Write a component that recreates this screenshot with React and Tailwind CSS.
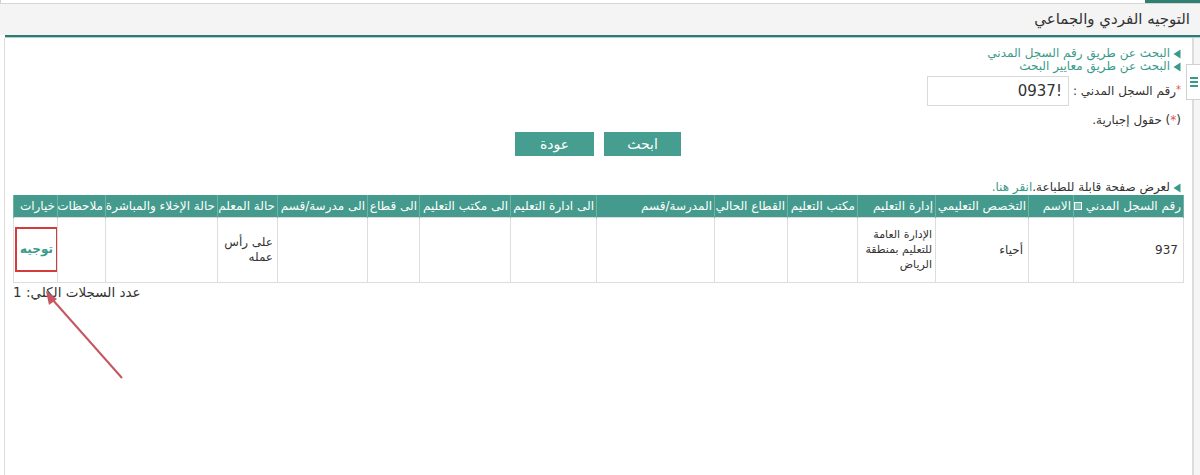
import React from 'react';

const columns = [
  { title: 'رقم السجل المدني', w: 'w-[110px]', icon: true },
  { title: 'الاسم', w: 'w-[45px]' },
  { title: 'التخصص التعليمي', w: 'w-[93px]' },
  { title: 'إدارة التعليم', w: 'w-[78px]' },
  { title: 'مكتب التعليم', w: 'w-[70px]' },
  { title: 'القطاع الحالي', w: 'w-[73px]' },
  { title: 'المدرسة/قسم', w: 'w-[118px]' },
  { title: 'الى ادارة التعليم', w: 'w-[86px]' },
  { title: 'الى مكتب التعليم', w: 'w-[91px]' },
  { title: 'الى قطاع', w: 'w-[52px]' },
  { title: 'الى مدرسة/قسم', w: 'w-[90px]' },
  { title: 'حالة المعلم', w: 'w-[60px]' },
  { title: 'حالة الإخلاء والمباشرة', w: 'w-[112px]' },
  { title: 'ملاحظات', w: 'w-[48px]' },
  { title: 'خيارات', w: 'w-[44px]' },
];

const Arrow = () => (
  <svg className="w-[8px] h-[10px] shrink-0" viewBox="0 0 8 10">
    <path d="M7.5 0.5 L0.5 5 L7.5 9.5 Z" fill="#3a9a8a" />
  </svg>
);

const cell = 'border border-[#dddddd]';

const App = () => {
  return (
    <div
      dir="rtl"
      className="relative w-[1200px] h-[475px] bg-white overflow-hidden text-[12px] text-[#333]"
      style={{ fontFamily: '"DejaVu Sans", "Noto Sans", sans-serif' }}
    >
      {/* top strip */}
      <div className="h-[4px] flex justify-between border-b border-[#d6d6d6]">
        <div className="w-[55px] bg-[#2f7f73]"></div>
        <div className="w-[25px] border-l border-[#cfcfcf]"></div>
      </div>

      {/* page title */}
      <div className="h-[31px] bg-[#f4f4f4] flex items-center pr-[10px]">
        <h1 className="text-[15px] text-[#333]">التوجيه الفردي والجماعي</h1>
      </div>
      <div className="h-[2px] bg-[#2e7a70] ml-[5px]"></div>
      <div className="h-[1px] bg-[#a9d3cc] ml-[5px]"></div>

      <div className="flex h-[437px]">
        {/* right gutter */}
        <div className="w-[8px] bg-[#f5f5f5] border-l border-[#dcdcdc]"></div>

        {/* content */}
        <div className="flex-1 border-x border-[#dcdcdc] ml-[4px] pr-[8px] pl-[8px] pt-[9px]">
          <div className="pr-[3px]">
            <div className="flex flex-col text-[12px] text-[#3a9a8a] leading-[13px]">
              <a className="flex items-center gap-[3px]"><Arrow />البحث عن طريق رقم السجل المدني</a>
              <a className="flex items-center gap-[3px]"><Arrow />البحث عن طريق معايير البحث</a>
            </div>

            <div className="flex items-center mt-[3px] h-[30px]">
              <span className="text-[12px]"><span className="text-[#e05050] text-[10px] align-top">*</span>رقم السجل المدني :</span>
              <div className="mr-[4px] w-[142px] h-[30px] border border-[#d9d9d9] flex items-center px-[6px] text-[15px] text-[#333]">
                <span>!</span>
                <span>0937</span>
              </div>
            </div>

            <div className="mt-[5px] text-[12px]">
              (<span className="text-[#e05050]">*</span>) حقول إجبارية.
            </div>

            <div className="flex justify-center gap-[10px] mt-[3px] pl-[2px]">
              <button className="w-[77px] h-[24px] bg-[#469e90] text-white text-[14px]">ابحث</button>
              <button className="w-[79px] h-[24px] bg-[#469e90] text-white text-[14px]">عودة</button>
            </div>

            <div className="mt-[25px] flex items-center gap-[3px] text-[12px] leading-[13px]">
              <Arrow />
              <span>لعرض صفحة قابلة للطباعة.<span className="text-[#3a9a8a]">انقر هنا.</span></span>
            </div>
          </div>

          <table className="mt-[1px] table-fixed border-collapse w-[1170px]">
            <thead>
              <tr className="h-[22px] bg-[#449a8c] text-white">
                {columns.map((c) => (
                  <th
                    key={c.title}
                    className={`${c.w} border-x border-[#6fb3a8] font-normal text-right px-[2px] whitespace-nowrap overflow-hidden text-[12px]`}
                  >
                    {c.title}
                    {c.icon && (
                      <span className="inline-block w-[8px] h-[8px] border border-white bg-[#7bbfb3] mr-[4px] align-middle"></span>
                    )}
                  </th>
                ))}
              </tr>
            </thead>
            <tbody>
              <tr className="h-[65px]">
                <td className={`${cell} px-[5px] align-middle text-right`}>937</td>
                <td className={cell}></td>
                <td className={`${cell} px-[5px] align-middle text-right`}>أحياء</td>
                <td className={`${cell} px-[3px] align-middle text-right leading-[15px] whitespace-nowrap text-[11px]`}>
                  الإدارة العامة<br />للتعليم بمنطقة<br />الرياض
                </td>
                <td className={cell}></td>
                <td className={cell}></td>
                <td className={cell}></td>
                <td className={cell}></td>
                <td className={cell}></td>
                <td className={cell}></td>
                <td className={cell}></td>
                <td className={`${cell} px-[4px] align-middle text-right leading-[15px]`}>على رأس<br />عمله</td>
                <td className={cell}></td>
                <td className={cell}></td>
                <td className={`${cell} p-0 align-top`}>
                  <div className="mt-[9px] mr-[-1px] ml-[1px] h-[45px] border-2 border-[#d23c3c] flex items-center justify-center text-[#3a9a8a] font-bold">
                    توجيه
                  </div>
                </td>
              </tr>
            </tbody>
          </table>

          <div className="text-left text-[13.5px] leading-[18px]">
            <span className="inline-block">عدد السجلات الكلي: 1</span>
          </div>
        </div>
      </div>

      {/* side tab */}
      <div className="absolute right-0 top-[64px] w-[14px] h-[36px] bg-white border border-[#d0d0d0] border-r-0 flex items-center justify-center">
        <svg width="8" height="12" viewBox="0 0 8 12">
          <rect x="0" y="1" width="8" height="2" fill="#3a9a8a" />
          <rect x="0" y="5" width="8" height="2" fill="#3a9a8a" />
          <rect x="0" y="9" width="8" height="2" fill="#3a9a8a" />
        </svg>
      </div>

      {/* annotation arrow */}
      <svg className="absolute left-0 top-0 pointer-events-none" width="1200" height="475">
        <line x1="122" y1="378" x2="52" y2="299" stroke="#c65560" strokeWidth="2" />
        <path d="M46 291 L57 299 L49 305 Z" fill="#c65560" />
      </svg>
    </div>
  );
};

export default App;
